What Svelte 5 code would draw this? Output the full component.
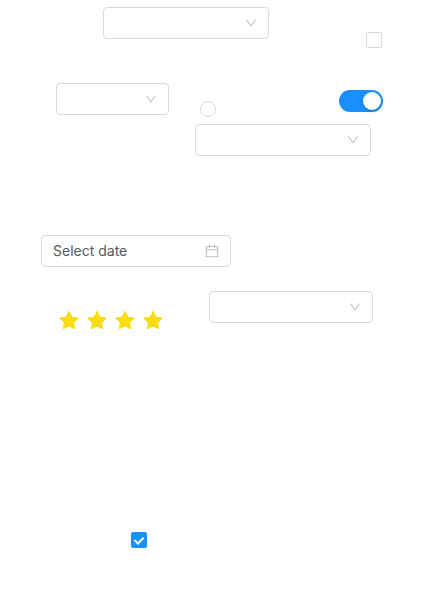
<script>
  let agree = $state(false);
  let choice = $state('');
  let enabled = $state(true);
  let confirmed = $state(true);
  let rating = $state(4);
  let date = $state('');
</script>

{#snippet dropdown(label)}
  <div class="select">
    <select aria-label={label}><option value=""></option></select>
    <svg class="arrow" viewBox="64 64 896 896" aria-hidden="true">
      <path d="M884 256h-75c-5.1 0-9.9 2.5-12.9 6.6L512 654.2 227.9 262.6c-3-4.1-7.8-6.6-12.9-6.6h-75c-6.5 0-10.3 7.4-6.5 12.7l352.6 486.1c12.8 17.6 39 17.6 51.7 0l352.6-486.1c3.9-5.3.1-12.7-6.4-12.7z" />
    </svg>
  </div>
{/snippet}

<main>
  <section class="row first">
    {@render dropdown('Category')}
    <input class="check end" type="checkbox" aria-label="Agree" bind:checked={agree} />
  </section>

  <section class="row second">
    {@render dropdown('Size')}
    <div class="stack">
      <div class="toggles">
        <input class="radio" type="radio" aria-label="Option" value="a" bind:group={choice} />
        <input class="switch" type="checkbox" role="switch" aria-label="Enabled" bind:checked={enabled} />
      </div>
      {@render dropdown('Type')}
    </div>
  </section>

  <section class="row third">
    <div class="date">
      <input type="text" placeholder="Select date" aria-label="Date" bind:value={date} />
      <svg viewBox="64 64 896 896" aria-hidden="true">
        <path d="M880 184H712v-64c0-4.4-3.6-8-8-8h-56c-4.4 0-8 3.6-8 8v64H384v-64c0-4.4-3.6-8-8-8h-56c-4.4 0-8 3.6-8 8v64H144c-17.7 0-32 14.3-32 32v664c0 17.7 14.3 32 32 32h736c17.7 0 32-14.3 32-32V216c0-17.7-14.3-32-32-32zm-40 656H184V460h656v380zM184 392V256h128v48c0 4.4 3.6 8 8 8h56c4.4 0 8-3.6 8-8v-48h256v48c0 4.4 3.6 8 8 8h56c4.4 0 8-3.6 8-8v-48h128v136H184z" />
      </svg>
    </div>
  </section>

  <section class="row fourth">
    <div class="rate" role="group" aria-label="Rating">
      {#each [1, 2, 3, 4] as n}
        <button type="button" class:full={n <= rating} aria-label={`${n} stars`} onclick={() => (rating = n)}>
          <svg viewBox="64 64 896 896" aria-hidden="true">
            <path d="M908.1 353.1l-253.9-36.9L540.7 86.1c-3.1-6.3-8.2-11.4-14.5-14.5-15.8-7.8-35-1.3-42.9 14.5L369.8 316.2l-253.9 36.9c-7 1-13.4 4.3-18.3 9.3a32.05 32.05 0 0 0 .6 45.3l183.7 179.1-43.4 252.9a31.95 31.95 0 0 0 46.4 33.7L512 754l227.1 119.4c6.2 3.3 13.4 4.4 20.3 3.2 17.4-3 29.1-19.5 26.1-36.9l-43.4-252.9 183.7-179.1c5-4.9 8.3-11.3 9.3-18.3 2.7-17.5-9.5-33.7-27-36.3z" />
          </svg>
        </button>
      {/each}
    </div>
    {@render dropdown('Level')}
  </section>

  <section class="row fifth">
    <input class="check" type="checkbox" aria-label="Confirmed" bind:checked={confirmed} />
  </section>
</main>

<style>
  :global(body) {
    margin: 0;
    background: #fff;
  }

  main {
    padding: 7px 0 45px;
    font: 14px/22px Inter, Roboto, "Liberation Sans", sans-serif;
    color: #595959;
  }

  main :global(*) {
    box-sizing: border-box;
  }

  /* Column tracks are proportional, so every row widens with the window. */
  .row {
    display: grid;
    align-items: start;
  }

  .row > :global(*) {
    grid-row: 1;
    min-width: 0;
  }

  .first {
    grid-template-columns: 103fr 166fr 97fr 58fr;
    height: 41px;
  }

  .first > :global(:first-child),
  .second > :global(:first-child),
  .third > :global(:first-child),
  .fourth > :global(:first-child),
  .fifth > :global(:first-child) {
    grid-column: 2;
  }

  .first > .end {
    grid-column: 4;
    align-self: end;
  }

  .second {
    grid-template-columns: 56fr 113fr 26fr 188fr 41fr;
    margin-top: 35px;
  }

  .stack {
    grid-column: 4;
    padding-top: 7px;
  }

  .stack > .select {
    margin: 7px 12px 0 0;
  }

  .toggles {
    display: flex;
    justify-content: space-between;
    height: 27px;
    padding-left: 5px;
  }

  .toggles .radio {
    align-self: flex-end;
  }

  .third {
    grid-template-columns: 41fr 190fr 193fr;
    margin-top: 79px;
  }

  .fourth {
    grid-template-columns: 59fr 104fr 46fr 164fr 51fr;
    margin-top: 24px;
  }

  .fourth > .select {
    grid-column: 4;
  }

  .fifth {
    grid-template-columns: 131fr 293fr;
    margin-top: 201px;
  }

  .select {
    position: relative;
    height: 32px;
  }

  select {
    display: block;
    width: 100%;
    height: 32px;
    margin: 0;
    padding: 0 32px 0 11px;
    appearance: none;
    border: 1px solid #d9d9d9;
    border-radius: 4px;
    background: #fff;
    color: inherit;
    font: inherit;
  }

  .arrow {
    position: absolute;
    top: 10px;
    right: 12px;
    width: 12px;
    height: 12px;
    fill: #bfbfbf;
    pointer-events: none;
  }

  .check,
  .radio,
  .switch {
    position: relative;
    appearance: none;
    flex: none;
    margin: 0;
    width: 16px;
    height: 16px;
    border: 1px solid #d9d9d9;
    border-radius: 2px;
    background: #fff;
  }

  .check:checked {
    border-color: #1890ff;
    background: #1890ff;
  }

  .check:checked::after {
    content: "";
    position: absolute;
    box-sizing: border-box;
    top: 2px;
    left: 4px;
    width: 6px;
    height: 9px;
    border: solid #fff;
    border-width: 0 2px 2px 0;
    transform: rotate(45deg);
  }

  .radio {
    border-radius: 50%;
  }

  .radio:checked {
    border: 4px solid #1890ff;
  }

  .switch {
    width: 44px;
    height: 22px;
    border: 0;
    border-radius: 11px;
    background: #bfbfbf;
  }

  .switch::after {
    content: "";
    position: absolute;
    top: 2px;
    left: 2px;
    width: 18px;
    height: 18px;
    border-radius: 9px;
    background: #fff;
    box-shadow: 0 2px 4px rgba(0, 35, 11, 0.2);
  }

  .switch:checked {
    background: #1890ff;
  }

  .switch:checked::after {
    left: 24px;
  }

  .date {
    display: flex;
    align-items: center;
    height: 32px;
    padding: 0 11px;
    border: 1px solid #d9d9d9;
    border-radius: 4px;
  }

  .date input {
    flex: 1;
    min-width: 0;
    height: 22px;
    padding: 0;
    border: 0;
    outline: 0;
    background: none;
    color: inherit;
    font: inherit;
  }

  .date input::placeholder {
    color: #595959;
    opacity: 1;
  }

  .date svg {
    flex: none;
    width: 14px;
    height: 14px;
    fill: #bfbfbf;
  }

  .rate {
    display: flex;
    justify-content: space-between;
    padding-top: 20px;
  }

  .rate button {
    width: 20px;
    height: 20px;
    padding: 0;
    border: 0;
    background: none;
    cursor: pointer;
  }

  .rate svg {
    display: block;
    width: 20px;
    height: 20px;
    fill: #f0f0f0;
  }

  .rate .full svg {
    fill: #fadb14;
  }
</style>
